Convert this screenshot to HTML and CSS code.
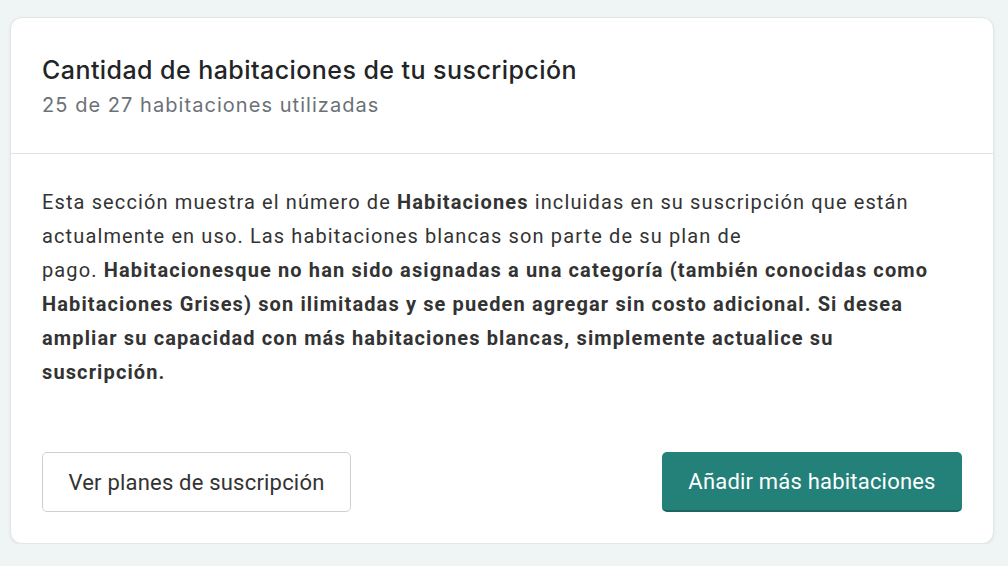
FILE: index.html
```html
<!DOCTYPE html>
<html lang="es">
<head>
<meta charset="utf-8">
<link rel="stylesheet" href="styles.css">
</head>
<body>
<section class="card">
  <header class="card-header">
    <h2 class="title">Cantidad de habitaciones de tu suscripción</h2>
    <p class="subtitle">25 de 27 habitaciones utilizadas</p>
  </header>
  <div class="card-body">
    <p class="text">Esta sección muestra el número de <strong>Habitaciones</strong> incluidas en su suscripción que están actualmente en uso. Las habitaciones blancas son parte de su plan de<br>pago. <strong>Habitacionesque no han sido asignadas a una categoría (también conocidas como Habitaciones Grises) son ilimitadas y se pueden agregar sin costo adicional. Si desea ampliar su capacidad con más habitaciones blancas, simplemente actualice su suscripción.</strong></p>
    <div class="actions">
      <button class="btn btn-outline">Ver planes de suscripción</button>
      <button class="btn btn-primary">Añadir más habitaciones</button>
    </div>
  </div>
</section>
</body>
</html>
```
FILE: styles.css
```css
html, body {
  margin: 0;
  padding: 0;
}
body {
  background: #eff5f5;
  padding: 17px 14px 0 10px;
  font-family: Roboto, "Liberation Sans", sans-serif;
}
.card {
  background: #fff;
  border: 1px solid #e1e7e7;
  border-radius: 12px;
  box-shadow: 0 1px 3px rgba(0, 0, 0, 0.08);
  height: 527px;
  box-sizing: border-box;
}
.card-header {
  padding: 37px 31px 34px;
  border-bottom: 1px solid #e3e2e8;
}
.title {
  margin: 0;
  font-family: Inter, "Noto Sans", sans-serif;
  font-size: 25px;
  line-height: 30px;
  font-weight: 500;
  letter-spacing: 0.44px;
  color: #222426;
}
.subtitle {
  margin: 6px 0 0;
  font-family: Inter, "Noto Sans", sans-serif;
  font-size: 20px;
  line-height: 28px;
  letter-spacing: 1.05px;
  color: #6c7178;
}
.card-body {
  padding: 31px 31px 0;
}
.text {
  margin: 0;
  font-size: 20px;
  line-height: 34px;
  letter-spacing: 1.12px;
  color: #333;
}
.text strong {
  font-weight: 700;
}
.actions {
  display: flex;
  justify-content: space-between;
  margin-top: 63px;
}
.btn {
  font-family: Roboto, "Liberation Sans", sans-serif;
  font-size: 22px;
  letter-spacing: 0.2px;
  height: 60px;
  border-radius: 5px;
  cursor: pointer;
  box-sizing: border-box;
}
.btn-outline {
  width: 309px;
  background: #fff;
  border: 1px solid #cfcfcf;
  color: #333;
}
.btn-primary {
  width: 300px;
  background: #23817a;
  border: none;
  border-bottom: 2px solid #1b6660;
  color: #fff;
}
```
